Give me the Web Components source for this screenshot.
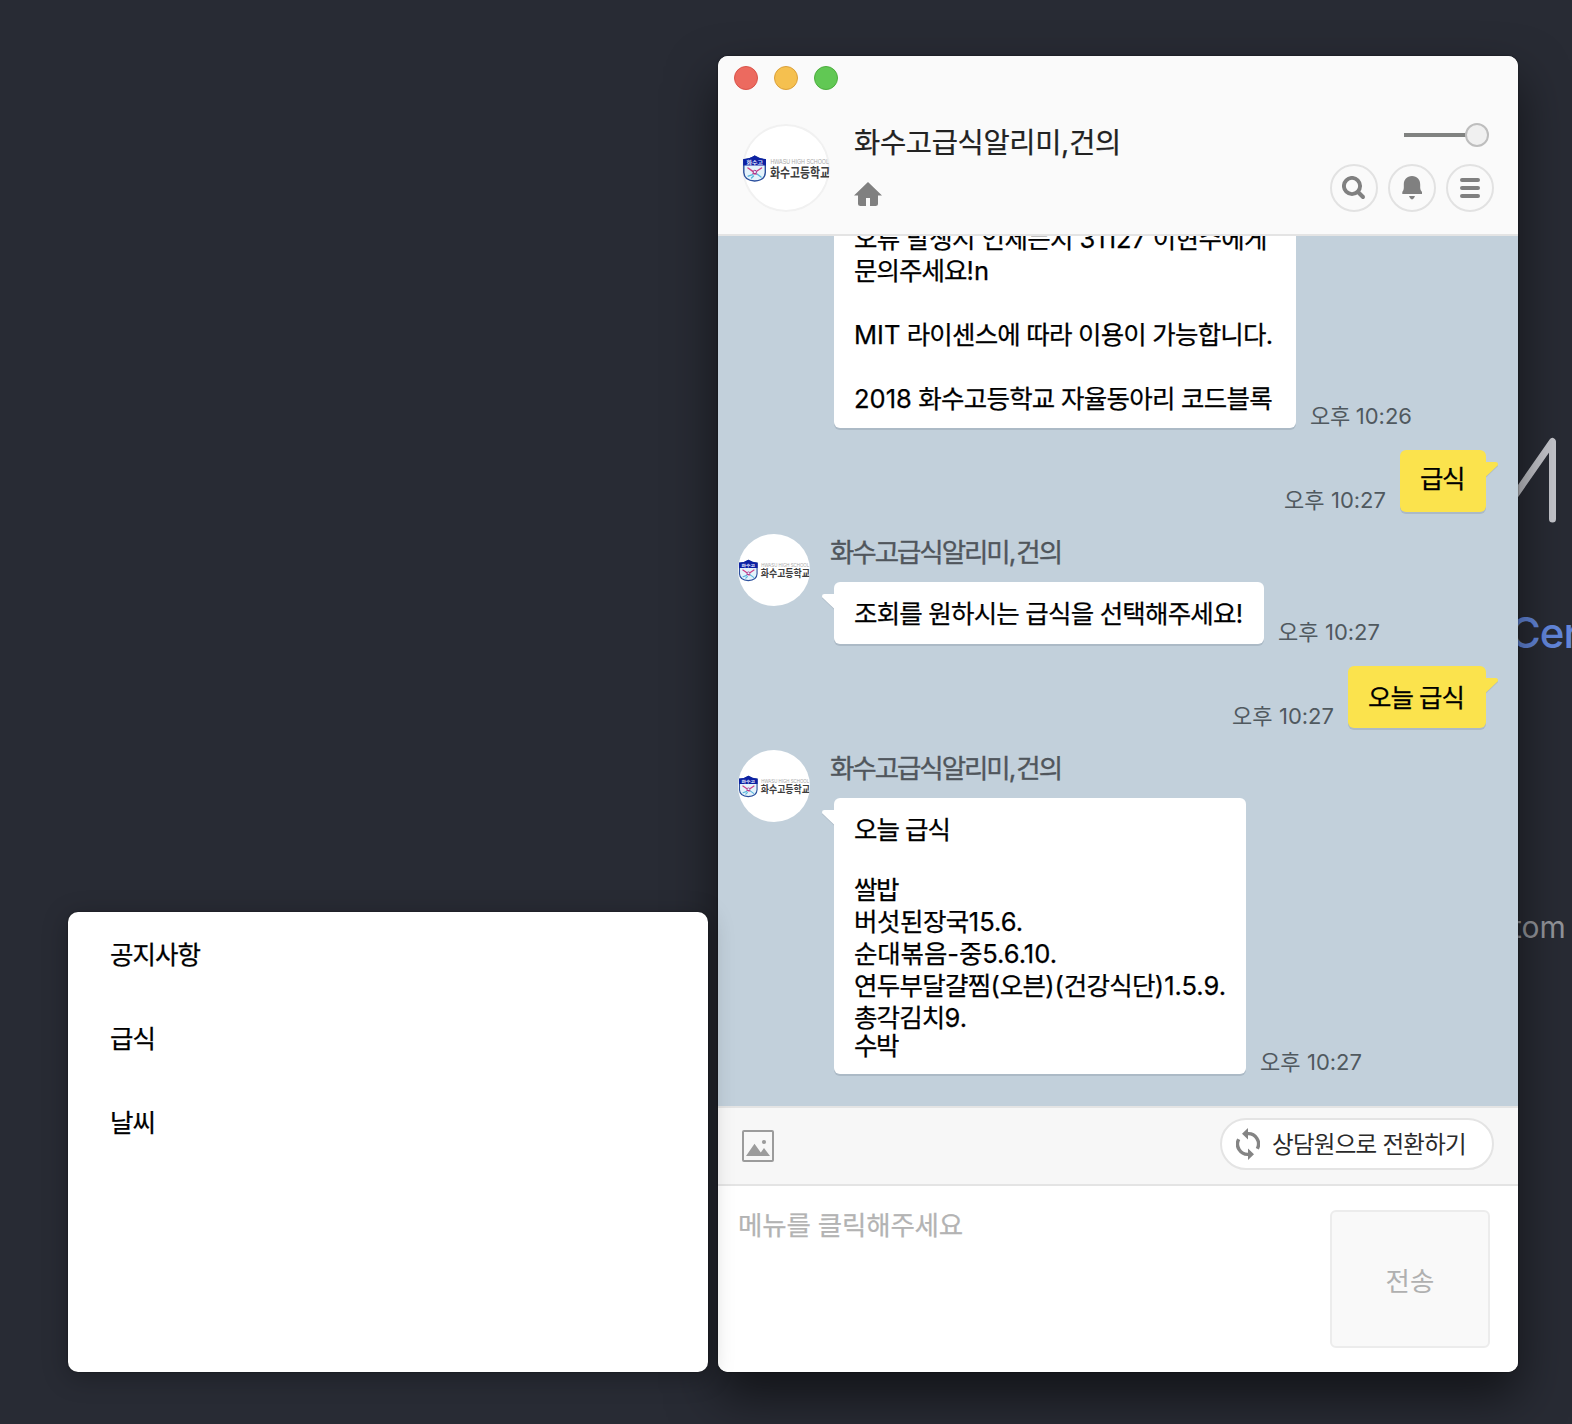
<!DOCTYPE html>
<html lang="ko">
<head>
<meta charset="utf-8">
<title>화수고급식알리미,건의</title>
<style>
  html, body { margin: 0; height: 100%; }
  body { width: 1572px; height: 1424px; overflow: hidden; background: #282b34; font-family: Inter, "Noto Sans CJK KR", sans-serif; }
</style>
</head>
<body>
<desk-top></desk-top>
<script>
const define = (name, html, setup) => {
  const t = document.createElement('template');
  t.innerHTML = html;
  customElements.define(name, class extends HTMLElement {
    connectedCallback() {
      if (this.shadowRoot) return;
      this.attachShadow({ mode: 'open' }).append(t.content.cloneNode(true));
      if (setup) setup(this, this.shadowRoot);
    }
  });
};

/* One line of text. Its Hangul is tracked to reach the width in "w"; Latin runs and digits keep their own spacing. */
define('fit-text', `<style>:host{display:block;width:max-content} span{display:inline-block;white-space:pre} ::slotted(i){font-style:normal;letter-spacing:0}</style><span><slot></slot></span>`, (el, root) => {
  const span = root.querySelector('span');
  const w = parseFloat(el.getAttribute('w'));
  const h = el.getAttribute('h');
  if (h) { el.style.height = h + 'px'; el.style.lineHeight = h + 'px'; }
  if (w) {
    const text = el.textContent;
    const n = [...text.replace(/[\x21-\x7e]/g, '')].length;
    el.innerHTML = text.replace(/[\x21-\x7e]+/g, '<i>$&</i>');
    el.style.letterSpacing = ((w - span.getBoundingClientRect().width) / n).toFixed(3) + 'px';
    el.style.width = w + 'px';
  }
});

define('school-avatar', `
  <style>:host{display:block;flex:none;width:72px;height:72px;border-radius:50%;overflow:hidden;background:#fff}
  :host([large]){width:88px;height:88px;box-shadow:inset 0 0 0 2px #f1f1f1}
  svg{display:block;width:100%;height:100%}</style>
  <svg viewBox="0 0 88 88">
    <path d="M1.8 35.6 Q8 35.4 12.6 32.2 Q17.500 35.4 23.300 35.6 V48.500 Q23 56.400 12.600 57 Q2.200 56.400 1.800 48.500Z" fill="#e4f3fb" stroke="#2b4f9d" stroke-width="1.400"/>
    <path d="M1.200 35.200 Q8 35 12.600 31.600 Q17.500 35 24 35.200 V41.500 H1.200Z" fill="#0d21a3"/>
    <text x="4.400" y="40.300" font-size="4.800" font-weight="700" textLength="16.500" lengthAdjust="spacingAndGlyphs" fill="#e8ecff" font-family="Noto Sans CJK KR, sans-serif">화수고</text>
    <path d="M6 44 l4.500 3.200 M19.500 44 l-4.500 3 M11 49.400 l3.500 .5" stroke="#cf3f86" stroke-width="1.500" stroke-linecap="round"/>
    <path d="M6.200 52.200 l4.500 -1.600 M19 53 l-4 -3 M9.500 54 l2 -2" stroke="#58b4dc" stroke-width="1.400" stroke-linecap="round"/>
    <circle cx="12.800" cy="48" r="1.700" fill="none" stroke="#a6388f" stroke-width="1"/>
    <text x="28.400" y="40" font-size="7.400" textLength="58.600" lengthAdjust="spacingAndGlyphs" fill="#a9a9a9" font-family="Liberation Sans, sans-serif">HWASU HIGH SCHOOL</text>
    <text x="27.900" y="52.800" font-size="13" font-weight="700" textLength="60" lengthAdjust="spacingAndGlyphs" fill="#3d3d3d" font-family="Noto Sans CJK KR, sans-serif">화수고등학교</text>
  </svg>`);

define('traffic-lights', `
  <style>:host{display:flex;gap:16px;padding:10px 0 0 16px}
  i{width:24px;height:24px;border-radius:50%;box-sizing:border-box;border:1px solid}
  .r{background:#ec6a5f;border-color:#d9534a}.y{background:#f5c04f;border-color:#dba03a}.g{background:#61c854;border-color:#4cae3e}</style>
  <i class="r"></i><i class="y"></i><i class="g"></i>`);

define('round-button', `
  <style>:host{display:grid;place-items:center;width:48px;height:48px;box-sizing:border-box;border:2px solid #e2e2e2;border-radius:50%}</style>
  <slot></slot>`);

define('volume-slider', `
  <style>:host{display:flex;align-items:center;height:24px}
  b{width:62px;height:4px;background:#808280;margin-right:-1px} i{width:24px;height:24px;box-sizing:border-box;border:2px solid #bebebe;border-radius:50%;background:#f0f0f0}</style>
  <b></b><i></i>`);

define('chat-header', `
  <style>
  :host{display:block;height:178px;background:#fafafa;border-bottom:2px solid #e4e4e4}
  .row{display:flex;padding:34px 24px 0 24px}
  .mid{flex:1;padding-left:24px}
  fit-text{font-size:28.5px;color:#222;-webkit-text-stroke:.25px #222}
  .home{display:block;margin-top:20px}
  .right{display:flex;flex-direction:column;align-items:flex-end}
  volume-slider{margin:-1px 5px 0 0}
  .btns{display:flex;gap:10px;margin-top:17px}
  svg{display:block}
  </style>
  <traffic-lights></traffic-lights>
  <div class="row">
    <school-avatar large></school-avatar>
    <div class="mid"><fit-text w="267" h="38">화수고급식알리미,건의</fit-text>
      <svg class="home" width="28" height="24" viewBox="0 0 28 24"><path fill="#808080" d="M14 0 L28 13.600 H24 V21.500 Q24 24 21.500 24 H16 V16 H12 V24 H6.500 Q4 24 4 21.500 V13.600 H0Z"/></svg>
    </div>
    <div class="right">
      <volume-slider></volume-slider>
      <div class="btns">
        <round-button><svg width="24" height="24" viewBox="0 0 24 24" fill="none" stroke="#808080"><circle cx="10" cy="10" r="8.100" stroke-width="3.900"/><path d="M16 16 L21 21" stroke-width="4" stroke-linecap="round"/></svg></round-button>
        <round-button><svg width="24" height="24" viewBox="0 0 24 24" fill="#808080"><path d="M12 0 C6.800 0 3.800 3.600 3.800 8.500 V12 Q3.800 14.200 2.300 16 V18 H22 V16 Q20.200 14.200 20.200 12 V8.500 C20.200 3.600 17.200 0 12 0Z"/><path d="M9 20 H15 L14 22 Q13 23.400 12 23.400 T10 22Z"/></svg></round-button>
        <round-button><svg width="24" height="24" viewBox="0 0 24 24" stroke="#808080" stroke-width="4" stroke-linecap="round"><path d="M4 4H20M4 12H20M4 20H20"/></svg></round-button>
      </div>
    </div>
  </div>`);

define('chat-bubble', `
  <style>
  :host{display:block;position:relative;box-sizing:border-box;background:var(--c,#fff);border-radius:6px;padding:16px 20px 14px;color:#000;font-size:25.500px;-webkit-text-stroke:.25px #000;box-shadow:0 2px 0 #acbac6}
  :host([mine]){--c:#fbe34d}
  svg{display:none;position:absolute;top:12px;left:-12px;filter:drop-shadow(0 1.500px 0 #acbac6)}
  :host([tail]) svg{display:block}
  :host([mine]) svg{left:auto;right:-12px;transform:scaleX(-1)}
  path{fill:var(--c,#fff)}
  </style>
  <svg width="12" height="16" viewBox="0 0 12 16"><path d="M12 0 H2.500 Q-1 .3 .4 3.500 L12 14.600Z"/></svg>
  <slot></slot>`);

define('chat-message', `
  <style>
  :host{display:flex;flex:none;margin-bottom:22px;align-items:flex-end;padding-left:20px}
  :host([mine]){flex-direction:row-reverse;padding:0 32px 0 0}
  school-avatar{align-self:flex-start}
  .gap{width:96px;flex:none}
  .col{display:flex;flex-direction:column;align-items:flex-start}
  .from{height:48px;margin-left:20px;color:#50565c;font-size:26.500px;-webkit-text-stroke:.35px}
  .body{margin-left:24px}
  .plain{margin-left:0}
  .time{margin:0 14px -2px;color:#50595f;font-size:22px}
  </style>`, (el, root) => {
  const mine = el.hasAttribute('mine'), from = el.getAttribute('from');
  root.innerHTML += (mine ? '' : from ? '<school-avatar></school-avatar>' : '<div class="gap"></div>') +
    `<div class="col">${from ? `<div class="from"><fit-text w="231" h="36">${from}</fit-text></div>` : ''}
     <div class="body ${from ? '' : 'plain'}"><slot></slot></div></div>
     <fit-text class="time" w="102" h="27">${el.getAttribute('time')}</fit-text>`;
});

define('chat-log', `
  <style>
  :host{display:flex;flex-direction:column;justify-content:flex-end;height:870px;overflow:hidden;background:#c2d0db;box-sizing:border-box;padding-bottom:10px}
  </style>
  <chat-message time="오후 10:26"><chat-bubble style="width:462px;padding:17px 20px 13px">
    <fit-text w="413" h="32">오류 발생시 언제든지 31127 이현수에게</fit-text>
    <fit-text w="135" h="32">문의주세요!n</fit-text>
    <fit-text h="32"> </fit-text>
    <fit-text w="419" h="32">MIT 라이센스에 따라 이용이 가능합니다.</fit-text>
    <fit-text h="32"> </fit-text>
    <fit-text w="418" h="32">2018 화수고등학교 자율동아리 코드블록</fit-text>
  </chat-bubble></chat-message>
  <chat-message mine time="오후 10:27"><chat-bubble mine tail style="width:86px;padding:12px 20px 18px"><fit-text w="44" h="33" style="margin-bottom:-1px">급식</fit-text></chat-bubble></chat-message>
  <chat-message from="화수고급식알리미,건의" time="오후 10:27"><chat-bubble tail style="width:430px"><fit-text w="389" h="32">조회를 원하시는 급식을 선택해주세요!</fit-text></chat-bubble></chat-message>
  <chat-message mine time="오후 10:27"><chat-bubble mine tail style="width:138px"><fit-text w="96" h="32">오늘 급식</fit-text></chat-bubble></chat-message>
  <chat-message from="화수고급식알리미,건의" time="오후 10:27"><chat-bubble tail style="width:412px;padding:18px 20px 17px">
    <fit-text w="96" h="28">오늘 급식</fit-text>
    <fit-text h="30"> </fit-text>
    <fit-text w="44" h="32">쌀밥</fit-text>
    <fit-text w="169" h="32">버섯된장국15.6.</fit-text>
    <fit-text w="203" h="32">순대볶음-중5.6.10.</fit-text>
    <fit-text w="372" h="32">연두부달걀찜(오븐)(건강식단)1.5.9.</fit-text>
    <fit-text w="113" h="32">총각김치9.</fit-text>
    <fit-text w="44" h="23">수박</fit-text>
  </chat-bubble></chat-message>`);

define('chat-toolbar', `
  <style>
  :host{display:flex;height:76px;background:#f7f7f7;border-top:2px solid #e4e4e4;border-bottom:2px solid #e4e4e4;justify-content:space-between;align-items:flex-start;padding:0 24px}
  .img{margin-top:22px;display:block}
  .pill{display:flex;align-items:center;box-sizing:border-box;width:274px;height:52px;margin-top:10px;border:2px solid #e4e4e4;border-radius:26px;background:#fff;padding-left:14px;gap:12px;font-size:23.500px;color:#2a2a2a}
  .pill fit-text{padding-top:1px}
  </style>
  <svg class="img" width="32" height="32" viewBox="0 0 32 32"><rect x="1" y="1" width="30" height="30" rx="1" fill="none" stroke="#9b9b9b" stroke-width="2"/><path fill="#9b9b9b" d="M4 26 L12.500 13.800 L18.800 22.500 L22 18 L28 26Z"/><circle cx="22" cy="12" r="2.100" fill="#9b9b9b"/></svg>
  <div class="pill">
    <svg width="24" height="32" viewBox="0 0 24 32"><g fill="none" stroke="#848484" stroke-width="3.400"><path d="M11.500 5.700 A10.300 10.300 0 0 1 21.300 20.800"/><path d="M12.500 26.300 A10.300 10.300 0 0 1 2.700 11.200"/></g><path fill="#848484" d="M12 0 V11.500 L6 5.700Z M12 20.500 V32 L18 26.300Z"/></svg>
    <fit-text w="194" h="34">상담원으로 전환하기</fit-text>
  </div>`);

define('chat-input', `
  <style>
  :host{display:flex;justify-content:space-between;height:186px;background:#fff;box-sizing:border-box;padding:24px 28px 24px 20px}
  .ph{color:#b3b3b3;font-size:26.500px;-webkit-text-stroke:.25px #b3b3b3}
  .send{display:grid;place-items:center;box-sizing:border-box;width:160px;height:138px;background:#f9f9f9;border:2px solid #ececec;border-radius:6px;color:#b0b0b0;font-size:26.500px;padding-top:4px}
  </style>
  <fit-text class="ph" w="225" h="30">메뉴를 클릭해주세요</fit-text>
  <div class="send"><fit-text w="49" h="40">전송</fit-text></div>`);

define('chat-window', `
  <style>
  :host{display:block;width:800px;height:1316px;border-radius:10px;background:#fff}
  .clip{border-radius:10px;overflow:hidden;height:100%}
  :host{box-shadow:0 0 2px rgba(0,0,0,.6),0 24px 50px rgba(0,0,0,.55)}
  </style>
  <div class="clip"><chat-header></chat-header><chat-log></chat-log><chat-toolbar></chat-toolbar><chat-input></chat-input></div>`);

define('menu-popup', `
  <style>
  :host{display:flex;flex-direction:column;gap:52px;box-sizing:border-box;width:640px;height:460px;border-radius:10px;background:#fff;padding:27px 42px;color:#000;font-size:25.500px;-webkit-text-stroke:.25px #000;position:relative;box-shadow:0 0 2px rgba(0,0,0,.5),0 5px 26px rgba(0,0,0,.28)}
  </style>
  <fit-text w="90" h="32">공지사항</fit-text><fit-text w="45" h="32">급식</fit-text><fit-text w="45" h="32">날씨</fit-text>`);

/* Editor splash that shows at the right edge, behind the windows. */
define('splash-screen', `
  <style>
  :host{display:block;position:absolute;inset:0;overflow:hidden}
  svg,.t{position:absolute}
  svg{left:1490px;top:430px}
  .a{left:1510px;top:606px;font:500 42px/54px Inter,sans-serif;letter-spacing:-1px;color:#6387dc}
  .b{left:1512px;top:908px;font:400 30px/38px Inter,sans-serif;color:#92949a}
  </style>
  <svg width="82" height="100" viewBox="0 0 82 100" fill="none" stroke="#c5c6cc" stroke-width="7" stroke-linecap="round" stroke-linejoin="round"><path d="M12 84 L62.500 11.500 V89"/></svg>
  <fit-text class="t a">Cer</fit-text><fit-text class="t b">tom</fit-text>`);

define('desk-top', `
  <style>
  :host{display:block;position:relative;width:1572px;height:1424px;overflow:hidden;background:#282b34}
  .wins{position:relative;display:flex;gap:10px;align-items:flex-end;padding:56px 54px 52px 68px;box-sizing:border-box;height:100%}
  menu-popup{z-index:1}
  </style>
  <splash-screen></splash-screen>
  <div class="wins"><menu-popup></menu-popup><chat-window></chat-window></div>`);
</script>
</body>
</html>
